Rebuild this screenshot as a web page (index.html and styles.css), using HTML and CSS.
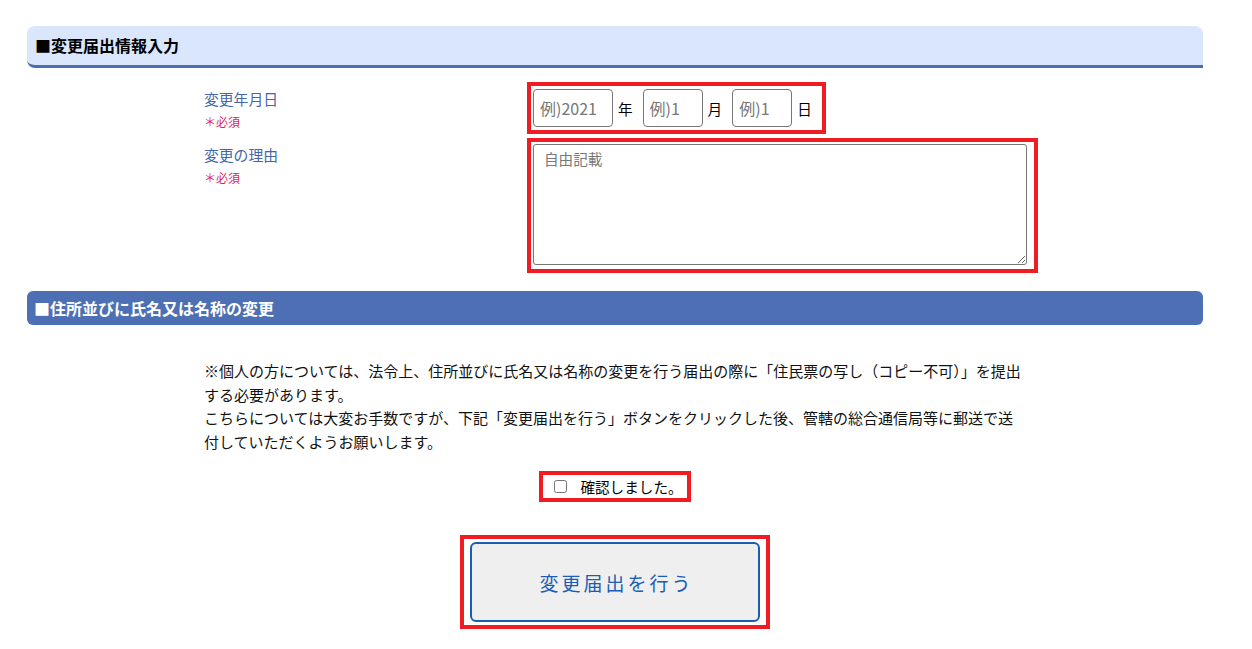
FILE: index.html
```html
<!DOCTYPE html>
<html lang="ja">
<head>
<meta charset="utf-8">
<link rel="stylesheet" href="styles.css">
</head>
<body>
<div class="page">
  <h2 class="sec-head light">■変更届出情報入力</h2>
  <div class="form">
    <div class="row">
      <div class="label">変更年月日<span class="req">＊必須</span></div>
      <div class="field">
        <div class="redbox date">
          <input class="in y" type="text" placeholder="例)2021"><span class="unit">年</span>
          <input class="in m" type="text" placeholder="例)1"><span class="unit">月</span>
          <input class="in m" type="text" placeholder="例)1"><span class="unit">日</span>
        </div>
      </div>
    </div>
    <div class="row">
      <div class="label">変更の理由<span class="req">＊必須</span></div>
      <div class="field">
        <div class="redbox area">
          <textarea class="ta" placeholder="自由記載"></textarea>
        </div>
      </div>
    </div>
  </div>
  <h2 class="sec-head dark">■住所並びに氏名又は名称の変更</h2>
  <div class="note">
    <p>※個人の方については、法令上、住所並びに氏名又は名称の変更を行う届出の際に「住民票の写し（コピー不可）」を提出<br>する必要があります。<br>こちらについては大変お手数ですが、下記「変更届出を行う」ボタンをクリックした後、管轄の総合通信局等に郵送で送<br>付していただくようお願いします。</p>
  </div>
  <div class="center">
    <label class="redbox check"><input type="checkbox" class="cb"><span>確認しました。</span></label>
  </div>
  <div class="center btnwrap">
    <div class="redbox btnbox"><button class="submit" type="button">変更届出を行う</button></div>
  </div>
</div>
</body>
</html>
```
FILE: styles.css
```css
html, body { margin: 0; padding: 0; background: #fff; }
body {
  font-family: "Noto Sans CJK JP", "Noto Sans", sans-serif;
  font-size: 14.6px;
  color: #000;
}
.page { padding: 26px 49px 0 27px; }
.sec-head {
  margin: 0;
  font-size: 16px;
  font-weight: bold;
  line-height: 20px;
}
.sec-head.light {
  background: #d9e6fb;
  border-bottom: 3px solid #4b6db3;
  border-radius: 8px 8px 0 8px;
  padding: 9px 8px 10px 8px;
  color: #000;
}
.sec-head.dark {
  background: #4d6fb4;
  color: #fff;
  border-radius: 6px;
  padding: 7px 7px 7px 7px;
  margin-top: 18px;
}
.form { padding: 14px 0 0 177px; display: flex; flex-direction: column; gap: 4px; }
.row { display: grid; grid-template-columns: 323px 1fr; }
.label {
  color: #4466aa;
  padding-top: 6px;
  line-height: 22px;
  font-size: 14.8px;
  display: flex;
  flex-direction: column;
}
.req { color: #dd1f5a; font-size: 12px; line-height: 18px; margin-top: 3px; }
.redbox { border: 4px solid #f01c24; display: inline-flex; align-items: center; box-sizing: border-box; }
.date { padding: 2px 0 2px 2px; height: 52px; }
.in {
  height: 38px;
  box-sizing: border-box;
  border: 1px solid #767676;
  border-radius: 4px;
  font-family: inherit;
  font-size: 16px;
  padding: 0 6px;
  margin: 0;
  color: #000;
}
.in::placeholder, .ta::placeholder { color: #777; }
.in.y { width: 80px; }
.in.m { width: 60px; }
.unit { font-size: 14.6px; margin: 0 10px 0 5px; }
.area { padding: 2px 7px 4px 2px; }
.ta {
  width: 494px;
  height: 121px;
  box-sizing: border-box;
  border: 1px solid #767676;
  border-radius: 3px;
  font-family: inherit;
  font-size: 14.6px;
  padding: 3px 10px;
  margin: 0;
  display: block;
}
.note { padding: 34px 0 0 177px; }
.note p { margin: 0; width: 860px; line-height: 23.5px; font-size: 15px; color: #111; }
.center { display: flex; justify-content: center; }
.check { margin-top: 18px; height: 31px; padding: 0 4px 0 11px; gap: 13px; font-size: 14.6px; }
.cb { margin: 0; width: 13px; height: 13px; }
.btnwrap { margin-top: 33px; }
.btnbox { padding: 3px 6px; }
.submit {
  width: 290px;
  height: 80px;
  background: #efefef;
  border: 2px solid #1a5db5;
  border-radius: 6px;
  color: #1a5db5;
  font-family: inherit;
  font-size: 19px;
  letter-spacing: 3px;
  padding: 0 0 0 3px;
}
```
